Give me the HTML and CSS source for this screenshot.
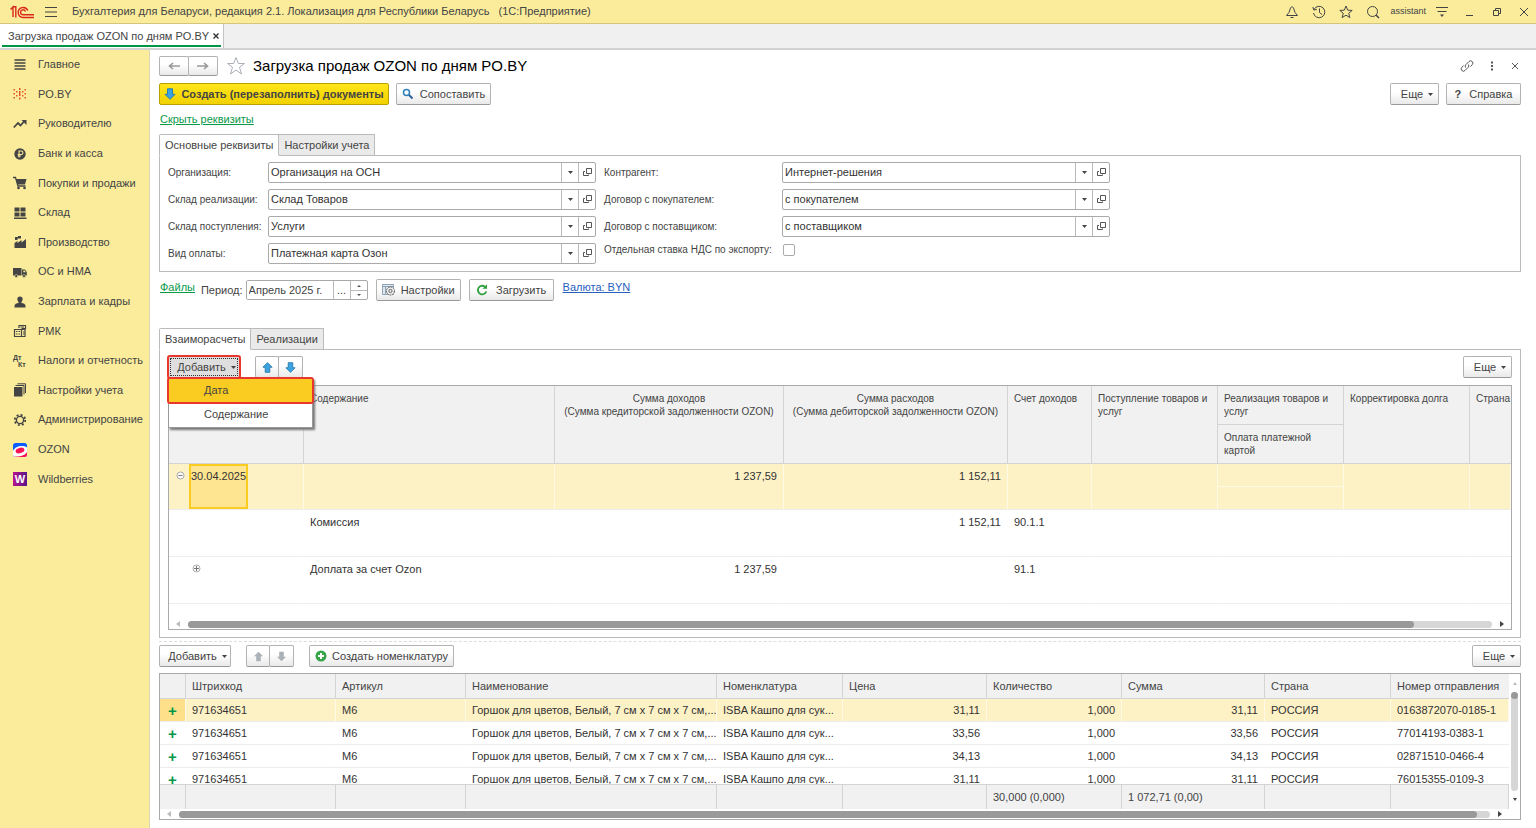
FILE: index.html
```html
<!DOCTYPE html>
<html lang="ru">
<head>
    <meta charset="UTF-8">
    <title>Загрузка продаж OZON по дням PO.BY</title>
    <link rel="stylesheet" href="styles.css">
</head>
<body>
    <svg class="defs" width="0" height="0">
        <symbol id="caret" viewBox="0 0 5 3"><path d="M0 0h5L2.500 3z"/></symbol>
        <symbol id="open" viewBox="0 0 9 9"><path d="M3.500 .5h5v5h-5zM2 3.500H.5v4h5V6.500" fill="none" stroke="#555"/></symbol>
        <symbol id="up" viewBox="0 0 12 12"><path d="M6 .7l5 5H8.500v5.500h-5V5.700H1z"/></symbol>
        <symbol id="down" viewBox="0 0 12 12"><path d="M6 11.300l5-5H8.500V.8h-5v5.500H1z"/></symbol>
    </svg>
    <header class="topbar">
        <svg class="logo" viewBox="0 0 24 14" width="24" height="14"><g fill="none" stroke="#d9291c" stroke-width="1.400"><path d="M.5 4.500l2.500-2.500v10M3 1.700h2.800v10.800"/><path d="M17.800 5.500a5 5 0 1 0-4.800 7h11"/><path d="M15.400 6.500a2.500 2.500 0 1 0-2.400 3.300h11"/></g></svg>
        <button class="icon-btn" aria-label="Меню"><svg viewBox="0 0 12 12" width="12" height="12"><path d="M0 1.500h12M0 6h12M0 10.500h12" stroke="#444"/></svg></button>
        <span class="app-title">Бухгалтерия для Беларуси, редакция 2.1. Локализация для Республики Беларусь &nbsp; (1С:Предприятие)</span>
        <div class="top-icons">
            <button class="icon-btn" aria-label="Уведомления"><svg viewBox="0 0 14 14" width="14" height="14"><path d="M1.500 10.500h11L10 7.500 8.500 3 7 1.500 5.500 3 4 7.500zM5.500 12.500h3" fill="none" stroke="#444"/></svg></button>
            <button class="icon-btn" aria-label="История"><svg viewBox="0 0 14 14" width="14" height="14"><path d="M2 4.500a5.700 5.700 0 1 1-.5 3.500M.8 2l1 3 3-.5M7.500 3.500v4l2.500 2" fill="none" stroke="#444"/></svg></button>
            <button class="icon-btn" aria-label="Избранное"><svg viewBox="0 0 14 14" width="14" height="14"><path d="M7 1l1.700 4.200 4.500.2-3.500 2.900 1.200 4.300L7 10.200l-3.900 2.400 1.200-4.300L.8 5.400l4.500-.2z" fill="none" stroke="#444"/></svg></button>
            <button class="icon-btn" aria-label="Поиск"><svg viewBox="0 0 14 14" width="14" height="14"><circle cx="6.500" cy="6.500" r="5" fill="none" stroke="#444"/><path d="M10 10l3 3" stroke="#444" stroke-width="1.500"/></svg></button>
            <span class="user">assistant</span>
            <button class="icon-btn" aria-label="Настройки"><svg viewBox="0 0 12 12" width="12" height="12"><path d="M0 1.500h12M1.500 5.500h9" stroke="#444"/><path d="M4 8.500h4L6 11z" fill="#444"/></svg></button>
            <button class="icon-btn win" aria-label="Свернуть"><svg viewBox="0 0 10 10" width="10" height="10"><path d="M1 8.500h7" stroke="#444"/></svg></button>
            <button class="icon-btn win" aria-label="Развернуть"><svg viewBox="0 0 10 10" width="10" height="10"><path d="M1.500 3.500h5v5h-5zM3.500 3V1.500h5v5H7" fill="none" stroke="#444"/></svg></button>
            <button class="icon-btn win" aria-label="Закрыть"><svg viewBox="0 0 10 10" width="10" height="10"><path d="M1 1l8 8M9 1l-8 8" stroke="#444"/></svg></button>
        </div>
    </header>
    <div class="tabbar">
        <div class="page-tab"><span>Загрузка продаж OZON по дням PO.BY</span>
            <button class="icon-btn" aria-label="Закрыть вкладку"><svg viewBox="0 0 6 6" width="6" height="6"><path d="M.5 .5l5 5M5.500 .5l-5 5" stroke="#333" stroke-width="1.400"/></svg></button>
        </div>
    </div>
    <div class="layout">
        <nav class="sidebar">
            <a href="#"><svg viewBox="0 0 14 14"><path d="M1.500 2h11M1.500 5h11M1.500 8h11M1.500 11h11" stroke="#444" stroke-width="1.600"/></svg>Главное</a>
            <a href="#"><svg viewBox="0 0 14 14"><path d="M.5 2h1.500v1.500H.5zM.5 6h1.500v1.500H.5zM.5 10h1.500v1.500H.5zM3 4h1.500v1.500H3zM3 8h1.500v1.500H3zM6 1h1.500v2H6zM6 4h1.500v5H6zM6 10.500h1.500v2H6zM9 4h1.500v1.500H9zM9 8h1.500v1.500H9zM11.500 2H13v1.500h-1.500zM11.500 6H13v1.500h-1.500zM11.500 10H13v1.500h-1.500z" fill="#e4542c"/></svg>PO.BY</a>
            <a href="#"><svg viewBox="0 0 14 14"><path d="M.8 10.500L5 6l2.500 2.500 4-4.500" fill="none" stroke="#444" stroke-width="1.800"/><path d="M8.500 3h5v5z" fill="#444"/></svg>Руководителю</a>
            <a href="#"><svg viewBox="0 0 14 14"><circle cx="7" cy="7" r="5.700" fill="#444"/><path d="M6 10.500V4h2.200a1.700 1.700 0 0 1 0 3.500H4.700M4.700 9H8" fill="none" stroke="#faec9b" stroke-width="1.100"/></svg>Банк и касса</a>
            <a href="#"><svg viewBox="0 0 14 14"><path d="M0 1.500h2.500L5 10h7.500" fill="none" stroke="#444" stroke-width="1.300"/><path d="M3 3h10.500L12 8.500H4.500z" fill="#444"/><circle cx="5.500" cy="12" r="1.300" fill="#444"/><circle cx="11.500" cy="12" r="1.300" fill="#444"/></svg>Покупки и продажи</a>
            <a href="#"><svg viewBox="0 0 14 14"><path d="M1.500 1.500h5v4h-5zM7.500 1.500h5v4h-5zM1.500 6.500h5v4h-5zM7.500 6.500h5v4h-5zM1 11.500h12.500V13H1z" fill="#444"/></svg>Склад</a>
            <a href="#"><svg viewBox="0 0 14 14"><path d="M1.500 13V8l3-2v2l4-3v2.500L13 4v9zM2 2h3V1h3v2.500H4.500V5H2z" fill="#444"/></svg>Производство</a>
            <a href="#"><svg viewBox="0 0 14 14"><path d="M0 3h8.500v7.500H0zM9 4.500h3L13.800 7.300v3.200H9z" fill="#444"/><path d="M10.300 5.500h1.400l1 1.800h-2.400z" fill="#faec9b"/><circle cx="3.200" cy="11" r="1.500" fill="#444" stroke="#faec9b" stroke-width=".5"/><circle cx="11" cy="11" r="1.500" fill="#444" stroke="#faec9b" stroke-width=".5"/></svg>ОС и НМА</a>
            <a href="#"><svg viewBox="0 0 14 14"><path d="M7 1.500c3.500 0 3 4 1.500 5.500v1c2 .5 4 .7 4 3V12.500h-11V11c0-2.300 2-2.500 4-3V7C4 5.500 3.500 1.500 7 1.500z" fill="#444"/></svg>Зарплата и кадры</a>
            <a href="#"><svg viewBox="0 0 14 14"><path d="M1.500 5.500h7v7h-7zM8.500 5.500H12v7H8.500M6 4V1.500h6.500v3h-4" fill="none" stroke="#444" stroke-width="1.200"/><path d="M3 7.500h1.500M5.500 7.500H7M3 10h1.500M5.500 10H7M10 8h1.500M10 10h1.500M7.500 3H11" stroke="#444"/></svg>РМК</a>
            <a href="#"><svg viewBox="0 0 14 14"><g fill="#444" font-family="Liberation Sans, sans-serif" font-size="7" font-weight="bold"><text x="0" y="6">Дт</text><text x="5" y="13">Кт</text></g></svg>Налоги и отчетность</a>
            <a href="#"><svg viewBox="0 0 14 14"><path d="M1 4h8.500v9.500H1z" fill="#444"/><path d="M2.500 2.500H11v9M4.500 .8h8V10" fill="none" stroke="#444"/></svg>Настройки учета</a>
            <a href="#"><svg viewBox="0 0 14 14"><circle cx="7" cy="7" r="3.600" fill="none" stroke="#444" stroke-width="1.400"/><circle cx="7" cy="7" r="5.200" fill="none" stroke="#444" stroke-width="1.800" stroke-dasharray="2 2.080"/></svg>Администрирование</a>
            <a href="#"><svg viewBox="0 0 14 14"><rect width="14" height="14" rx="2.500" fill="#0b5cff"/><path d="M0 8C2 3.500 9 1.500 14 4.500v7a2.500 2.500 0 0 1-2.500 2.500h-9A2.500 2.500 0 0 1 0 11.500z" fill="#fff"/><ellipse cx="7" cy="7.500" rx="4.500" ry="2.700" transform="rotate(-15 7 7.500)" fill="#f91155"/><path d="M1.500 13.500c5 .3 10-.7 12.500-4.500v2.500a2.500 2.500 0 0 1-2.500 2.500h-9z" fill="#f91155"/></svg>OZON</a>
            <a href="#"><svg viewBox="0 0 14 14"><defs><linearGradient id="wb" x2="1"><stop stop-color="#b8148c"/><stop offset="1" stop-color="#57168c"/></linearGradient></defs><rect width="14" height="14" fill="url(#wb)"/><text x="7" y="11" text-anchor="middle" fill="#fff" font-family="Liberation Sans, sans-serif" font-size="11" font-weight="bold">W</text></svg>Wildberries</a>
        </nav>
        <main class="main">
            <div class="title-row">
                <div class="pair">
                    <button class="btn" aria-label="Назад"><svg viewBox="0 0 12 8" width="12" height="8"><path d="M12 4H2M5 1L1.500 4 5 7" fill="none" stroke="#999" stroke-width="1.600"/></svg></button>
                    <button class="btn" aria-label="Вперед"><svg viewBox="0 0 12 8" width="12" height="8"><path d="M0 4h10M7 1l3.500 3L7 7" fill="none" stroke="#999" stroke-width="1.600"/></svg></button>
                </div>
                <button class="icon-btn star" aria-label="В избранное"><svg viewBox="0 0 20 20" width="20" height="20"><path d="M10 1.500l2.300 6h6.200l-5 3.800 2 6.700L10 14l-5.500 4 2-6.700-5-3.800h6.200z" fill="none" stroke="#a9b0b8"/></svg></button>
                <h1>Загрузка продаж OZON по дням PO.BY</h1>
                <div class="title-tools">
                    <button class="icon-btn" aria-label="Ссылка"><svg viewBox="0 0 14 14" width="14" height="14"><path d="M5.500 8.500a2.500 2.500 0 0 1 .5-3l3-3a2.200 2.200 0 0 1 3.200 3.200L10.500 7.500M8.500 5.500a2.500 2.500 0 0 1-.5 3l-3 3A2.200 2.200 0 0 1 1.800 8.300L3.500 6.500" fill="none" stroke="#555"/></svg></button>
                    <button class="icon-btn" aria-label="Еще"><svg viewBox="0 0 10 10" width="10" height="10"><path d="M4 .5h2v2H4zM4 4h2v2H4zM4 7.500h2v2H4z" fill="#555"/></svg></button>
                    <button class="icon-btn" aria-label="Закрыть"><svg viewBox="0 0 10 10" width="10" height="10"><path d="M2 2l6 6M8 2L2 8" stroke="#555"/></svg></button>
                </div>
            </div>
            <div class="commands">
                <button class="btn primary"><svg class="blue" width="12" height="12"><use href="#down"/></svg>Создать (перезаполнить) документы</button>
                <button class="btn match"><svg viewBox="0 0 12 12" width="12" height="12"><circle cx="4.500" cy="4.500" r="3" fill="none" stroke="#2d7fb8" stroke-width="1.500"/><path d="M7 7l3.500 3.500" stroke="#2d5f98" stroke-width="2"/></svg>Сопоставить</button>
                <button class="btn more push">Еще<svg class="caret"><use href="#caret"/></svg></button>
                <button class="btn help"><b>?</b>Справка</button>
            </div>
            <a class="green-link hide-link" href="#">Скрыть реквизиты</a>

            <div class="tabs">
                <button class="tab active">Основные реквизиты</button>
                <button class="tab">Настройки учета</button>
            </div>
            <section class="panel details">
                <div class="fields">
                    <label for="org">Организация:</label>
                    <div class="combo"><select id="org"><option>Организация на ОСН</option></select><svg class="caret"><use href="#caret"/></svg><button aria-label="Открыть"><svg width="9" height="9"><use href="#open"/></svg></button></div>
                    <label for="sale">Склад реализации:</label>
                    <div class="combo"><select id="sale"><option>Склад Товаров</option></select><svg class="caret"><use href="#caret"/></svg><button aria-label="Открыть"><svg width="9" height="9"><use href="#open"/></svg></button></div>
                    <label for="receipt">Склад поступления:</label>
                    <div class="combo"><select id="receipt"><option>Услуги</option></select><svg class="caret"><use href="#caret"/></svg><button aria-label="Открыть"><svg width="9" height="9"><use href="#open"/></svg></button></div>
                    <label for="pay">Вид оплаты:</label>
                    <div class="combo"><select id="pay"><option>Платежная карта Озон</option></select><svg class="caret"><use href="#caret"/></svg><button aria-label="Открыть"><svg width="9" height="9"><use href="#open"/></svg></button></div>
                </div>
                <div class="fields wide">
                    <label for="agent">Контрагент:</label>
                    <div class="combo"><select id="agent"><option>Интернет-решения</option></select><svg class="caret"><use href="#caret"/></svg><button aria-label="Открыть"><svg width="9" height="9"><use href="#open"/></svg></button></div>
                    <label for="buyer">Договор с покупателем:</label>
                    <div class="combo"><select id="buyer"><option>с покупателем</option></select><svg class="caret"><use href="#caret"/></svg><button aria-label="Открыть"><svg width="9" height="9"><use href="#open"/></svg></button></div>
                    <label for="supplier">Договор с поставщиком:</label>
                    <div class="combo"><select id="supplier"><option>с поставщиком</option></select><svg class="caret"><use href="#caret"/></svg><button aria-label="Открыть"><svg width="9" height="9"><use href="#open"/></svg></button></div>
                    <label for="vat">Отдельная ставка НДС по экспорту:</label>
                    <input type="checkbox" id="vat">
                </div>
            </section>

            <div class="period-row">
                <a class="green-link" href="#">Файлы</a>
                <label for="period">Период:</label>
                <div class="period">
                    <input type="text" id="period" value="Апрель 2025 г.">
                    <button aria-label="Выбрать">...</button>
                    <div class="spin">
                        <button aria-label="Больше"><svg viewBox="0 0 4 2" width="4" height="2"><path d="M0 2h4L2 0z" fill="#555"/></svg></button>
                        <button aria-label="Меньше"><svg viewBox="0 0 4 2" width="4" height="2"><path d="M0 0h4L2 2z" fill="#555"/></svg></button>
                    </div>
                </div>
                <button class="btn with-icon"><svg viewBox="0 0 14 12" width="14" height="12"><path d="M.5 .5h11v10H.5z" fill="#dfe8f0" stroke="#8fa3b5"/><path d="M.5 2.500h11M3.500 2v8" stroke="#8fa3b5"/><circle cx="8.500" cy="7" r="4" fill="#eee" stroke="#666" stroke-dasharray="2 .6"/><circle cx="8.500" cy="7" r="1.600" fill="none" stroke="#666"/></svg>Настройки</button>
                <button class="btn with-icon"><svg viewBox="0 0 12 12" width="12" height="12"><path d="M10.300 7.500A4.300 4.300 0 1 1 8.800 2.600" fill="none" stroke="#2f9e3c" stroke-width="1.800"/><path d="M6.500 4.700h4.500V.3z" fill="#2f9e3c"/></svg><span class="load">Загрузить</span></button>
                <a class="blue-link" href="#">Валюта: BYN</a>
            </div>

            <div class="tabs">
                <button class="tab active">Взаиморасчеты</button>
                <button class="tab">Реализации</button>
            </div>
            <section class="panel settle">
                <div class="toolbar">
                    <div class="add-wrap">
                        <button class="btn add focused">Добавить<svg class="caret"><use href="#caret"/></svg></button>
                        <div class="menu">
                            <button class="current">Дата</button>
                            <button>Содержание</button>
                        </div>
                    </div>
                    <div class="pair arrows">
                        <button class="btn" aria-label="Вверх"><svg class="blue" width="11" height="11"><use href="#up"/></svg></button>
                        <button class="btn" aria-label="Вниз"><svg class="blue" width="11" height="11"><use href="#down"/></svg></button>
                    </div>
                    <button class="btn more push">Еще<svg class="caret"><use href="#caret"/></svg></button>
                </div>
                <div class="grid-box">
                    <table class="settle-table">
                        <colgroup><col class="w-date"><col><col class="w-in"><col class="w-out"><col class="w-acc"><col class="w-doc"><col class="w-doc"><col class="w-doc"><col class="w-cut"></colgroup>
                        <thead>
                            <tr>
                                <th rowspan="2"></th>
                                <th rowspan="2">Содержание</th>
                                <th rowspan="2" class="mid">Сумма доходов<br>(Сумма кредиторской задолженности OZON)</th>
                                <th rowspan="2" class="mid">Сумма расходов<br>(Сумма дебиторской задолженности OZON)</th>
                                <th rowspan="2">Счет доходов</th>
                                <th rowspan="2">Поступление товаров и<br>услуг</th>
                                <th class="half">Реализация товаров и<br>услуг</th>
                                <th rowspan="2">Корректировка долга</th>
                                <th rowspan="2" class="cut">Страна</th>
                            </tr>
                            <tr><th class="half">Оплата платежной<br>картой</th></tr>
                        </thead>
                        <tbody>
                            <tr class="selected">
                                <td rowspan="2" class="date"><div class="date-cell"><svg viewBox="0 0 9 9" width="9" height="9"><circle cx="4.500" cy="4.500" r="3.500" fill="#fff" stroke="#aaa"/><path d="M2.500 4.500h4" stroke="#777"/></svg><span>30.04.2025</span></div></td>
                                <td rowspan="2"></td>
                                <td rowspan="2" class="num">1 237,59</td>
                                <td rowspan="2" class="num">1 152,11</td>
                                <td rowspan="2"></td>
                                <td rowspan="2"></td>
                                <td class="split"></td>
                                <td rowspan="2"></td>
                                <td rowspan="2"></td>
                            </tr>
                            <tr class="selected"><td class="half-cell"></td></tr>
                            <tr class="plain"><td></td><td>Комиссия</td><td></td><td class="num">1 152,11</td><td>90.1.1</td><td></td><td></td><td></td><td></td></tr>
                            <tr class="plain"><td class="nested"><svg viewBox="0 0 9 9" width="9" height="9"><circle cx="4.500" cy="4.500" r="3.500" fill="#fff" stroke="#aaa"/><path d="M2 4.500h5M4.500 2v5" stroke="#777"/></svg></td><td>Доплата за счет Ozon</td><td class="num">1 237,59</td><td></td><td>91.1</td><td></td><td></td><td></td><td></td></tr>
                        </tbody>
                    </table>
                    <div class="hscroll"><i class="left"></i><div class="track"><div class="thumb"></div></div><i class="right"></i></div>
                </div>
            </section>

            <div class="splitter"></div>
            <div class="toolbar">
                <button class="btn add">Добавить<svg class="caret"><use href="#caret"/></svg></button>
                <div class="pair arrows off">
                    <button class="btn" aria-label="Вверх" disabled><svg width="11" height="11"><use href="#up"/></svg></button>
                    <button class="btn" aria-label="Вниз" disabled><svg width="11" height="11"><use href="#down"/></svg></button>
                </div>
                <button class="btn create"><svg viewBox="0 0 12 12" width="12" height="12"><circle cx="6" cy="6" r="5.500" fill="#35a547"/><path d="M6 3v6M3 6h6" stroke="#fff" stroke-width="2"/></svg>Создать номенклатуру</button>
                <button class="btn more push">Еще<svg class="caret"><use href="#caret"/></svg></button>
            </div>
            <div class="grid-box goods-box">
                <div class="goods-view">
                    <div class="goods-scroll">
                        <table class="goods">
                            <colgroup><col class="g-mark"><col class="g-code"><col class="g-art"><col><col class="g-item"><col class="g-price"><col class="g-qty"><col class="g-sum"><col class="g-country"><col class="g-no"></colgroup>
                            <thead>
                                <tr><th></th><th>Штрихкод</th><th>Артикул</th><th>Наименование</th><th>Номенклатура</th><th>Цена</th><th>Количество</th><th>Сумма</th><th>Страна</th><th>Номер отправления</th></tr>
                            </thead>
                            <tbody>
                                <tr class="selected"><td class="mark">+</td><td>971634651</td><td>М6</td><td>Горшок для цветов, Белый, 7 см х 7 см х 7 см,...</td><td>ISBA Кашпо для сук...</td><td class="num">31,11</td><td class="num">1,000</td><td class="num">31,11</td><td>РОССИЯ</td><td>0163872070-0185-1</td></tr>
                                <tr><td class="mark">+</td><td>971634651</td><td>М6</td><td>Горшок для цветов, Белый, 7 см х 7 см х 7 см,...</td><td>ISBA Кашпо для сук...</td><td class="num">33,56</td><td class="num">1,000</td><td class="num">33,56</td><td>РОССИЯ</td><td>77014193-0383-1</td></tr>
                                <tr><td class="mark">+</td><td>971634651</td><td>М6</td><td>Горшок для цветов, Белый, 7 см х 7 см х 7 см,...</td><td>ISBA Кашпо для сук...</td><td class="num">34,13</td><td class="num">1,000</td><td class="num">34,13</td><td>РОССИЯ</td><td>02871510-0466-4</td></tr>
                                <tr><td class="mark">+</td><td>971634651</td><td>М6</td><td>Горшок для цветов, Белый, 7 см х 7 см х 7 см,...</td><td>ISBA Кашпо для сук...</td><td class="num">31,11</td><td class="num">1,000</td><td class="num">31,11</td><td>РОССИЯ</td><td>76015355-0109-3</td></tr>
                            </tbody>
                            <tfoot>
                                <tr><td></td><td></td><td></td><td></td><td></td><td></td><td>30,000 (0,000)</td><td>1 072,71 (0,00)</td><td></td><td></td></tr>
                            </tfoot>
                        </table>
                    </div>
                    <div class="vscroll"><i class="top"></i><div class="track"><div class="thumb"></div></div><i class="bottom"></i></div>
                </div>
                <div class="hscroll"><i class="left"></i><div class="track"><div class="thumb"></div></div><i class="right"></i></div>
            </div>
        </main>
    </div>
</body>
</html>
```

FILE: styles.css
```css
*{
    box-sizing:border-box;
}
body{
    margin:0;
    min-height:100vh;
    display:flex;
    flex-direction:column;
    background:#fff;
    color:#444;
    font:11px/13px "Liberation Sans", Arial, sans-serif;
}
button,input,select{
    margin:0;
    padding:0;
    font:inherit;
    color:inherit;
}
svg{
    flex:none;
    display:block;
}
.defs{
    position:absolute;
}
.icon-btn{
    display:flex;
    border:0;
    background:none;
}

/* шапка */
.topbar{
    display:flex;
    align-items:center;
    height:24px;
    padding:0 7px 0 10px;
    background:#faec9b;
    border-bottom:1px solid #d3c57c;
}
.logo{
    margin-right:11px;
}
.app-title{
    margin-left:15px;
    white-space:pre;
}
.top-icons{
    display:flex;
    align-items:center;
    gap:13px;
    margin-left:auto;
}
.user{
    margin:0 -3px;
    font-size:9px;
}
.win{
    margin-left:4px;
}
.tabbar{
    display:flex;
    height:26px;
    background:#f0f0f0;
    border-bottom:2px solid #d2d2d2;
}
.page-tab{
    display:flex;
    align-items:center;
    gap:4px;
    padding:0 4px 0 8px;
    background:linear-gradient(#009646,#009646) 2px 21px / calc(100% - 4px) 2px no-repeat #fff;
    border-right:1px solid #c4c4c4;
}
.layout{
    flex:1;
    display:flex;
    background:linear-gradient(#faec9b,#faec9b) 0 0 / 149px 100% no-repeat,linear-gradient(#ddd6ac,#ddd6ac) 149px 0 / 1px 100% no-repeat;
}
.sidebar{
    flex:none;
    display:grid;
    grid-auto-rows:1fr;
    width:150px;
    height:444px;
}
.sidebar a{
    display:flex;
    align-items:center;
    gap:11px;
    padding-left:13px;
    color:#444;
    text-decoration:none;
    white-space:nowrap;
}
.sidebar svg{
    width:14px;
    height:14px;
}

.main{
    flex:1;
    min-width:0;
    padding:6px 15px 6px 9px;
}
.btn{
    display:flex;
    align-items:center;
    justify-content:center;
    height:22px;
    padding:0 9px;
    border:1px solid #b3b3b3;
    border-bottom-color:#999;
    border-radius:2px;
    background:linear-gradient(#fff 40%,#e9e9e9);
    white-space:nowrap;
}
.caret{
    width:5px;
    height:3px;
    fill:#444;
}
.pair{
    display:flex;
}
.pair .btn{
    width:30px;
    height:20px;
    padding:0;
}
.pair .btn + .btn{
    margin-left:-1px;
}
.title-row{
    display:flex;
    align-items:center;
    height:20px;
}
.star{
    margin:0 7px 0 8px;
}
h1{
    margin:0;
    color:#000;
    font-size:15px;
    line-height:20px;
    font-weight:normal;
}
.title-tools{
    display:flex;
    align-items:center;
    gap:13px;
    margin:0 1px 0 auto;
}
.commands{
    display:flex;
    gap:7px;
    margin-top:7px;
}
.primary{
    width:230px;
    gap:5px;
    border-color:#b9a000;
    background:linear-gradient(#ffe61a,#f2d100);
    font-weight:bold;
}
.match{
    width:95px;
    gap:6px;
}
.blue{
    fill:#3ba3e0;
    stroke:#2b7cb0;
}
.push{
    margin-left:auto;
}
.more{
    width:49px;
    gap:5px;
    padding:0 4px 0 9px;
}
.help{
    width:75px;
    gap:8px;
}
.green-link{
    color:#0a9a4a;
}
.hide-link{
    display:block;
    width:max-content;
    margin:8px 1px;
}

/* вкладки формы */
.tabs{
    position:relative;
    display:flex;
    height:22px;
}
.tab{
    padding:0 5px;
    border:1px solid #bbb;
    border-left:0;
    background:#eaeaea;
    white-space:nowrap;
}
.tab.active{
    border-left:1px solid #bbb;
    border-bottom-color:#fff;
    border-radius:2px 0 0 0;
    background:#fff;
}
.panel{
    margin-top:-1px;
    border:1px solid #bbb;
}
.details{
    display:flex;
    gap:8px;
    padding:6px 8px 7px;
}
.fields{
    display:grid;
    grid-template-columns:100px 328px;
    gap:6px 0;
    align-items:center;
    align-content:start;
}
.fields.wide{
    grid-template-columns:178px 328px;
}
.fields label{
    font-size:10px;
    white-space:nowrap;
}
.combo{
    display:grid;
    grid-template-columns:1fr 16px 17px;
    height:21px;
    border:1px solid #aaa;
    border-radius:2px;
    align-items:center;
}
.combo select{
    grid-area:1/1/2/3;
    width:100%;
    height:19px;
    padding-left:2px;
    border:0;
    appearance:none;
    color:#333;
    background:linear-gradient(#bbb,#bbb) right 16px top / 1px 100% no-repeat;
}
.combo .caret{
    grid-area:1/2;
    justify-self:center;
    pointer-events:none;
}
.combo button{
    grid-area:1/3;
    display:flex;
    align-items:center;
    justify-content:center;
    height:19px;
    border:0;
    border-left:1px solid #bbb;
    background:none;
}
#vat{
    width:12px;
    height:12px;
    margin:0 0 0 1px;
    appearance:none;
    border:1px solid #aaa;
    border-radius:2px;
}
.period-row{
    display:flex;
    height:22px;
    align-items:center;
    margin:7px 0 27px 1px;
}
.period-row label{
    margin:0 3px 0 6px;
}
.period-row > a{
    align-self:flex-start;
    line-height:16px;
}
.period{
    display:flex;
    width:122px;
    height:20px;
    border:1px solid #aaa;
    border-radius:2px;
}
.period input{
    flex:1;
    min-width:0;
    padding-left:2px;
    border:0;
}
.period button{
    width:17px;
    border:0;
    border-left:1px solid #bbb;
    background:none;
}
.spin{
    display:flex;
    flex-direction:column;
}
.spin button{
    display:flex;
    align-items:center;
    justify-content:center;
    height:9px;
}
.spin button + button{
    border-top:1px solid #bbb;
}
.with-icon{
    width:85px;
    gap:5px;
    margin-left:8px;
}
.load{
    margin-left:3px;
}
.blue-link{
    margin-left:9px;
    color:#2860c0;
}

/* взаиморасчеты */
.settle{
    padding:6px 8px 7px;
}
.toolbar{
    display:flex;
    height:22px;
}
.add{
    width:72px;
    gap:5px;
    padding:0 4px 0 9px;
}
.add-wrap{
    position:relative;
}
.focused{
    background:#dedede;
    outline:2px solid #e8372c;
    outline-offset:-1px;
    border:1px solid #fff;
}
.focused::after{
    content:"";
    position:absolute;
    inset:2px;
    border:1px dotted #333;
}
.menu{
    position:absolute;
    z-index:2;
    top:22px;
    left:0;
    width:145px;
    border:1px solid #999;
    background:#fff;
    box-shadow:2px 2px 2px #777;
}
.menu button{
    display:block;
    width:100%;
    height:25px;
    padding-left:35px;
    border:0;
    background:none;
    text-align:left;
}
.menu .current{
    height:23px;
    background:#facb20;
    outline:2px solid #e8372c;
    border-radius:1px;
}
.arrows{
    margin-left:15px;
}
.arrows .btn{
    width:24px;
    height:22px;
}
.arrows .btn + .btn{
    width:25px;
}
.off{
    fill:#aab2b8;
}
.create{
    width:145px;
    gap:5px;
    margin-left:15px;
}
.grid-box{
    margin-top:7px;
    border:1px solid #aaa;
    overflow:hidden;
}
table{
    width:100%;
    table-layout:fixed;
    border-spacing:0;
}
th,td{
    padding:6px 6px 5px;
    text-align:left;
    vertical-align:top;
    font-weight:normal;
    white-space:nowrap;
    overflow:hidden;
}
th{
    background:#f1f1f1;
    border-right:1px solid #d4d4d4;
    border-bottom:1px solid #d4d4d4;
}
td{
    color:#333;
    border-right:1px solid transparent;
    border-bottom:1px solid #ececec;
}
th:last-child,td:last-child{
    border-right:0;
}
.num{
    text-align:right;
}
.selected td{
    background:#fdf1c6;
    border-right:1px solid #fff9e5;
}
.w-date{ width:135px; }
.w-in{ width:229px; }
.w-out{ width:224px; }
.w-acc{ width:84px; }
.w-doc{ width:126px; }
.w-cut{ width:41px; }
.settle-table th{
    font-size:10px;
}
.settle-table .half{
    height:39px;
    border-right:1px solid #d4d4d4;
}
.settle-table .mid{
    text-align:center;
}
.settle-table .cut{
    padding-right:0;
}
.settle-table .selected{
    height:23px;
}
.selected .split{
    border-bottom-color:#fff9e5;
}
.settle-table .plain{
    height:47px;
}
.selected .date{
    padding:0 0 0 7px;
}
.date-cell{
    display:flex;
    gap:4px;
    height:45px;
}
.date-cell svg{
    margin-top:7px;
}
.date-cell span{
    padding:4px 0;
    border:2px solid #facb20;
    background:#fee591;
}
.settle-table .nested{
    padding:7px 0 0 23px;
}
.hscroll{
    display:flex;
    align-items:center;
    gap:8px;
    height:10px;
    padding:0 7px;
}
.settle .hscroll{
    margin-top:15px;
}
.track{
    flex:1;
    border-radius:4px;
    background:#d6d6d6;
}
.hscroll .track{
    height:7px;
}
.thumb{
    width:94%;
    height:7px;
    border-radius:4px;
    background:#999;
}
.hscroll i{
    border:3px solid transparent;
    border-width:3px 4px 3px 0;
    border-right-color:#bbb;
}
.hscroll .right{
    border-width:3px 0 3px 4px;
    border-left-color:#444;
}
.splitter{
    height:4px;
    margin-bottom:3px;
    border-bottom:1px dashed #ddd;
}

/* товары */
.goods-box{
    margin-top:6px;
}
.goods-view{
    display:flex;
    height:135px;
}
.goods-scroll{
    flex:1;
    min-width:0;
    overflow:hidden;
}
.goods thead{
    position:sticky;
    top:0;
}
.goods tfoot{
    position:sticky;
    bottom:0;
}
.goods th,.goods tfoot td{
    height:25px;
    padding:0 6px;
    vertical-align:middle;
}
.goods td{
    height:23px;
    padding:0 6px;
    vertical-align:middle;
}
.goods tfoot td{
    color:#444;
    background:#f1f1f1;
    border-top:1px solid #d4d4d4;
    border-right:1px solid #d4d4d4;
    border-bottom:0;
}
.goods .mark{
    padding:0;
    color:#009646;
    font-size:15px;
    font-weight:bold;
    text-align:center;
}
.goods .selected .mark{
    background:#fee08a;
}
.g-mark{ width:26px; }
.g-code{ width:150px; }
.g-art{ width:130px; }
.g-item{ width:126px; }
.g-price{ width:144px; }
.g-qty{ width:135px; }
.g-sum{ width:143px; }
.g-country{ width:126px; }
.g-no{ width:118px; }
.vscroll{
    display:flex;
    flex-direction:column;
    align-items:center;
    gap:7px;
    width:11px;
    padding:8px 0;
}
.vscroll .track{
    width:7px;
}
.vscroll .thumb{
    width:7px;
}
.vscroll i{
    border:2px solid transparent;
    border-width:0 2px 3px;
    border-bottom-color:#bbb;
}
.vscroll .bottom{
    border-width:3px 2px 0;
    border-top-color:#444;
}
.goods-box .hscroll .thumb{
    width:99%;
}
.goods-box .hscroll{
    padding-right:18px;
}
```
